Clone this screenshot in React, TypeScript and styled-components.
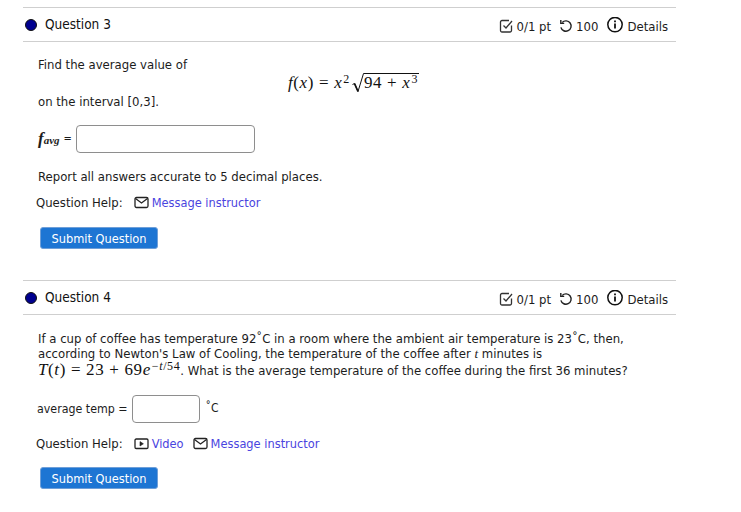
import styled, { createGlobalStyle } from 'styled-components';

const GlobalStyle = createGlobalStyle`
  html, body {
    margin: 0;
    background: #ffffff;
    color: #1c1c1c;
    font-family: 'DejaVu Sans Condensed', 'DejaVu Sans', sans-serif;
    font-size: 13px;
  }
`;

const Page = styled.div`
  display: flex;
  flex-direction: column;
  gap: 31px;
  width: 653px;
  padding: 7px 0 0 23px;
`;

const Question = styled.section``;

const Header = styled.div`
  height: 33px;
  display: flex;
  align-items: center;
  border-top: 1px solid #cfcfcf;
  border-bottom: 1px solid #cfcfcf;
`;

const Dot = styled.span`
  width: 10px;
  height: 10px;
  margin: 0 8px 0 2px;
  border-radius: 50%;
  background: #00008f;
  border: 0.5px solid #111;
`;

const Title = styled.h2`
  flex: 1;
  margin: 0 0 1px;
  font-size: 13.5px;
  font-weight: 400;
  color: #111;
`;

const Score = styled.div`
  display: flex;
  align-items: center;
  padding: 3px 8px 0 0;
  font-size: 13px;
  color: #1c1c1c;
`;

const ScoreIcon = styled.svg<{ $gap: number }>`
  margin-right: ${(p) => p.$gap}px;
  flex: none;
`;

const ScoreText = styled.span<{ $gap: number }>`
  margin-right: ${(p) => p.$gap}px;
`;

const Body = styled.div`
  padding: 15px 0 0 15px;
`;

const Line = styled.p<{ $top?: number; $height?: number }>`
  margin: ${(p) => p.$top ?? 0}px 0 0;
  line-height: ${(p) => p.$height ?? 16}px;
  font-size: 13px;
  white-space: nowrap;
`;

const Formula = styled.div`
  display: flex;
  justify-content: center;
  align-items: flex-start;
  height: 21px;
  padding-right: 7px;
`;

const MathText = styled.span`
  font-family: 'Liberation Serif', serif;
  font-size: 17px;
  letter-spacing: 0.6px;
  white-space: nowrap;
  color: #111;
`;

const Var = styled.i`
  font-family: 'Liberation Serif', serif;
`;

const Op = styled.span`
  margin: 0 5px;
`;

const Sup = styled.sup`
  font-size: 12px;
  line-height: 0;
  margin-left: 1px;
  vertical-align: 5px;
`;

const Root = styled.span`
  display: inline-flex;
  align-items: flex-start;
  vertical-align: -5px;
  margin-left: 2px;
`;

const Radicand = styled.span`
  display: block;
  border-top: 1px solid #111;
  line-height: 17px;
  padding-right: 1px;
`;

const AnswerRow = styled.div<{ $top: number }>`
  display: flex;
  align-items: center;
  margin-top: ${(p) => p.$top}px;
  height: 28px;
`;

const AvgLabel = styled.span`
  display: flex;
  align-items: baseline;
  font-family: 'Liberation Serif', serif;
  font-style: italic;
  font-weight: 700;
  font-size: 17px;
`;

const AvgSub = styled.span`
  font-size: 11px;
  margin-top: 4px;
`;

const Equals = styled.span`
  font-size: 11px;
  margin: 0 4px 2px 4px;
`;

const TempLabel = styled.span`
  margin: 0 4px 0 -1px;
  font-size: 12.3px;
`;

const Unit = styled.span`
  margin: 0 0 2px 6px;
  font-size: 12px;
`;

const Input = styled.input<{ $width: number }>`
  box-sizing: border-box;
  width: ${(p) => p.$width}px;
  height: 28px;
  padding: 0;
  border: 1px solid #8e8e8e;
  border-radius: 4px;
  background: #fff;
`;

const Help = styled.div<{ $top: number }>`
  display: flex;
  align-items: center;
  height: 18px;
  margin: ${(p) => p.$top}px 0 0 -2px;
  font-size: 13px;
`;

const HelpLabel = styled.span`
  margin-right: 11px;
`;

const HelpLink = styled.a`
  display: flex;
  align-items: center;
  gap: 3px;
  margin-right: 9px;
  padding-top: 1px;
  color: #4a44e0;
  font-size: 12.7px;
  text-decoration: none;
`;

const SubmitButton = styled.button<{ $top: number }>`
  display: block;
  box-sizing: border-box;
  width: 118px;
  height: 22px;
  margin: ${(p) => p.$top}px 0 0 2px;
  padding: 0;
  border: 1px solid #6f9fd8;
  border-radius: 3px;
  background: #1d75d3;
  color: #fff;
  font-family: inherit;
  font-size: 12.7px;
`;

const CheckIcon = () => (
  <ScoreIcon $gap={4} width="14" height="14" viewBox="0 0 14 14" fill="none" stroke="#333" strokeWidth="1.3">
    <path d="M12.5 6.5v5a1.5 1.5 0 0 1-1.5 1.5H3a1.5 1.5 0 0 1-1.5-1.5V3A1.5 1.5 0 0 1 3 1.5h7" />
    <path d="M4.5 6.5 7 9l6-7" />
  </ScoreIcon>
);

const RetryIcon = () => (
  <ScoreIcon $gap={3} width="14" height="14" viewBox="0 0 14 14" fill="none" stroke="#222" strokeWidth="1.4">
    <path d="M3.2 3.4A5.2 5.2 0 1 1 1.9 8.4" />
    <path d="M1.8 1v3.4h3.4" />
  </ScoreIcon>
);

const InfoIcon = () => (
  <ScoreIcon $gap={3} width="18" height="18" viewBox="0 0 18 18" fill="none" stroke="#111" strokeWidth="1.5">
    <circle cx="9" cy="7.6" r="7.2" />
    <path d="M9 6.6v5" strokeWidth="1.8" />
    <path d="M9 3.4v1.8" strokeWidth="1.8" />
  </ScoreIcon>
);

const MailIcon = () => (
  <svg width="15" height="13" viewBox="0 0 15 13" fill="none" stroke="#222" strokeWidth="1.3">
    <rect x="1" y="1.5" width="13" height="10" rx="1.5" />
    <path d="M1.5 2.5 7.5 7l6-4.5" />
  </svg>
);

const VideoIcon = () => (
  <svg width="15" height="13" viewBox="0 0 15 13" fill="none" stroke="#222" strokeWidth="1.3">
    <rect x="1" y="2" width="13" height="9.5" rx="1.2" />
    <path d="M6 4.6v4.4l3.4-2.2z" fill="#222" strokeWidth="0.6" />
  </svg>
);

const RadicalSign = () => (
  <svg width="12" height="20" viewBox="0 0 12 20" fill="none" stroke="#111">
    <path d="M0.5 11.5 2.5 10.5 6 18.5 11.5 0.5H12" strokeWidth="1" />
    <path d="M2.5 10.5 6 18.5" strokeWidth="1.8" />
  </svg>
);

const QuestionHeader = ({ title }: { title: string }) => (
  <Header>
    <Dot />
    <Title>{title}</Title>
    <Score>
      <CheckIcon />
      <ScoreText $gap={8}>0/1 pt</ScoreText>
      <RetryIcon />
      <ScoreText $gap={8}>100</ScoreText>
      <InfoIcon />
      <span>Details</span>
    </Score>
  </Header>
);

const App = () => (
  <Page>
    <GlobalStyle />
    <Question>
      <QuestionHeader title="Question 3" />
      <Body>
        <Line>Find the average value of</Line>
        <Formula>
          <MathText>
            <Var>f</Var>(<Var>x</Var>)<Op>=</Op>
            <Var>x</Var>
            <Sup>2</Sup>
            <Root>
              <RadicalSign />
              <Radicand>
                94<Op>+</Op>
                <Var>x</Var>
                <Sup>3</Sup>
              </Radicand>
            </Root>
          </MathText>
        </Formula>
        <Line>on the interval [0,3].</Line>
        <AnswerRow $top={15}>
          <AvgLabel>
            f<AvgSub>avg</AvgSub>
          </AvgLabel>
          <Equals>=</Equals>
          <Input $width={179} />
        </AnswerRow>
        <Line $top={16}>Report all answers accurate to 5 decimal places.</Line>
        <Help $top={8}>
          <HelpLabel>Question Help:</HelpLabel>
          <HelpLink href="#">
            <MailIcon />
            Message instructor
          </HelpLink>
        </Help>
        <SubmitButton $top={16}>Submit Question</SubmitButton>
      </Body>
    </Question>
    <Question>
      <QuestionHeader title="Question 4" />
      <Body>
        <Line $top={1} $height={15}>
          If a cup of coffee has temperature 92˚C in a room where the ambient air temperature is 23˚C, then,
        </Line>
        <Line $height={15}>
          according to Newton's Law of Cooling, the temperature of the coffee after <Var>t</Var> minutes is
        </Line>
        <Line $height={18}>
          <MathText>
            <Var>T</Var>(<Var>t</Var>)<Op>=</Op>23<Op>+</Op>69<Var>e</Var>
            <Sup>
              −<Var>t</Var>/54
            </Sup>
          </MathText>
          . What is the average temperature of the coffee during the first 36 minutes?
        </Line>
        <AnswerRow $top={15}>
          <TempLabel>average temp =</TempLabel>
          <Input $width={68} />
          <Unit>˚C</Unit>
        </AnswerRow>
        <Help $top={11}>
          <HelpLabel>Question Help:</HelpLabel>
          <HelpLink href="#">
            <VideoIcon />
            Video
          </HelpLink>
          <HelpLink href="#">
            <MailIcon />
            Message instructor
          </HelpLink>
        </Help>
        <SubmitButton $top={15}>Submit Question</SubmitButton>
      </Body>
    </Question>
  </Page>
);

export default App;
